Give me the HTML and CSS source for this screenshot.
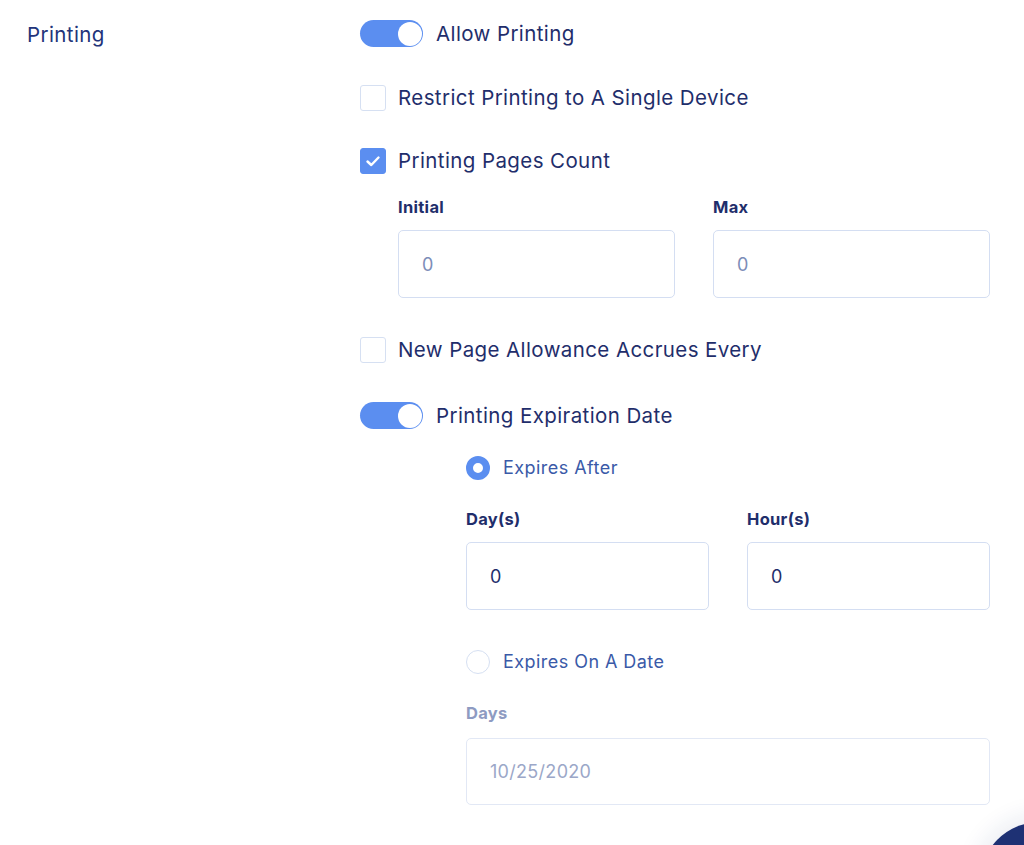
FILE: index.html
```html
<!DOCTYPE html>
<html lang="en">
<head>
<meta charset="utf-8">
<title>Printing</title>
<link rel="stylesheet" href="styles.css">
</head>
<body>
<div class="page">
  <div class="section-label">Printing</div>
  <div class="form">
    <div class="row row-first">
      <span class="toggle on"><span class="knob"></span></span>
      <span class="row-text toggle-text">Allow Printing</span>
    </div>
    <div class="row row-second">
      <span class="checkbox"></span>
      <span class="row-text">Restrict Printing to A Single Device</span>
    </div>
    <div class="row row-third">
      <span class="checkbox checked">
        <svg viewBox="0 0 26 26" width="26" height="26"><path d="M7.5 13.5 L11.3 17 L18.5 9.5" fill="none" stroke="#fff" stroke-width="2.4" stroke-linecap="round" stroke-linejoin="round"/></svg>
      </span>
      <span class="row-text">Printing Pages Count</span>
    </div>
    <div class="fields fields-pages">
      <div class="field">
        <div class="field-label">Initial</div>
        <div class="input muted">0</div>
      </div>
      <div class="field">
        <div class="field-label">Max</div>
        <div class="input muted">0</div>
      </div>
    </div>
    <div class="row row-after-fields">
      <span class="checkbox"></span>
      <span class="row-text">New Page Allowance Accrues Every</span>
    </div>
    <div class="row row-toggle2">
      <span class="toggle on"><span class="knob"></span></span>
      <span class="row-text toggle-text">Printing Expiration Date</span>
    </div>
    <div class="sub">
      <div class="row radio-row radio-first">
        <span class="radio selected"></span>
        <span class="radio-text">Expires After</span>
      </div>
      <div class="fields fields-expire">
        <div class="field">
          <div class="field-label">Day(s)</div>
          <div class="input dark">0</div>
        </div>
        <div class="field">
          <div class="field-label">Hour(s)</div>
          <div class="input dark">0</div>
        </div>
      </div>
      <div class="row radio-row radio-second">
        <span class="radio"></span>
        <span class="radio-text">Expires On A Date</span>
      </div>
      <div class="field field-date">
        <div class="field-label disabled">Days</div>
        <div class="input date">10/25/2020</div>
      </div>
    </div>
  </div>
</div>
<div class="chat-button"></div>
</body>
</html>
```
FILE: styles.css
```css
html, body {
  margin: 0;
  padding: 0;
  background: #ffffff;
  overflow: hidden;
}
body {
  width: 1024px;
  height: 845px;
  position: relative;
  font-family: "Inter", "Noto Sans", sans-serif;
  color: #1f2e6b;
}
.page {
  display: flex;
  padding-left: 27px;
  padding-top: 20px;
}
.section-label {
  width: 333px;
  font-size: 20.5px;
  letter-spacing: 0.4px;
  line-height: 27px;
  color: #22347a;
  padding-top: 1px;
}
.form {
  width: 630px;
  display: flex;
  flex-direction: column;
}
.row {
  display: flex;
  align-items: center;
}
.row-text {
  font-size: 20.5px;
  letter-spacing: 0.4px;
  line-height: 26px;
  color: #1f2e6b;
  margin-left: 12px;
}
.row-text.toggle-text { margin-left: 13px; }
.row-second { margin-top: 38px; }
.row-third { margin-top: 37px; }
.toggle {
  width: 63px;
  height: 27px;
  border-radius: 14px;
  background: #5b8ef0;
  display: flex;
  align-items: center;
  justify-content: flex-end;
  padding-right: 1px;
  box-sizing: border-box;
  flex-shrink: 0;
}
.knob {
  width: 24px;
  height: 24px;
  border-radius: 50%;
  background: #ffffff;
}
.checkbox {
  width: 26px;
  height: 26px;
  box-sizing: border-box;
  border: 1.5px solid #d6e0f2;
  border-radius: 3px;
  background: #fff;
  flex-shrink: 0;
  display: flex;
}
.checkbox.checked {
  background: #5b8ef0;
  border-color: #5b8ef0;
}
.checkbox.checked svg {
  margin: -1.5px;
}
.fields {
  display: grid;
  grid-template-columns: 1fr 1fr;
}
.fields-pages {
  margin-left: 38px;
  margin-top: 23px;
  column-gap: 38px;
}
.fields-expire {
  margin-top: 29px;
  column-gap: 38px;
}
.field-label {
  font-size: 16.5px;
  font-weight: 700;
  line-height: 20px;
  color: #1f2e6b;
  letter-spacing: 0.3px;
}
.field-label.disabled {
  color: #8e9bc2;
}
.input {
  margin-top: 13px;
  height: 68px;
  box-sizing: border-box;
  border: 1.5px solid #d4def2;
  border-radius: 5px;
  padding-left: 23px;
  display: flex;
  align-items: center;
  font-size: 18px;
  letter-spacing: 0.3px;
}
.input.muted { color: #7d8db8; }
.input.dark { color: #1f2e6b; }
.input.date {
  color: #9ba7c8;
  height: 67px;
  border-color: #e2e8f5;
}
.row-after-fields { margin-top: 39px; }
.row-toggle2 { margin-top: 39px; }
.sub {
  margin-left: 106px;
  display: flex;
  flex-direction: column;
}
.radio-first { margin-top: 27px; }
.radio-second { margin-top: 40px; }
.radio {
  width: 24px;
  height: 24px;
  border-radius: 50%;
  box-sizing: border-box;
  border: 1.5px solid #d6e0f2;
  background: #fff;
  flex-shrink: 0;
}
.radio.selected {
  border: 7px solid #5b8ef0;
}
.radio-text {
  font-size: 18px;
  letter-spacing: 0.45px;
  line-height: 24px;
  color: #3a5aa8;
  margin-left: 13px;
}
.field-date {
  margin-top: 29px;
}
.field-date .input { margin-top: 15px; }
.chat-button {
  position: absolute;
  left: 980px;
  top: 822px;
  width: 120px;
  height: 120px;
  border-radius: 50%;
  background: #1e3174;
  box-shadow: 0 0 22px 8px rgba(30, 49, 116, 0.08);
}
```
